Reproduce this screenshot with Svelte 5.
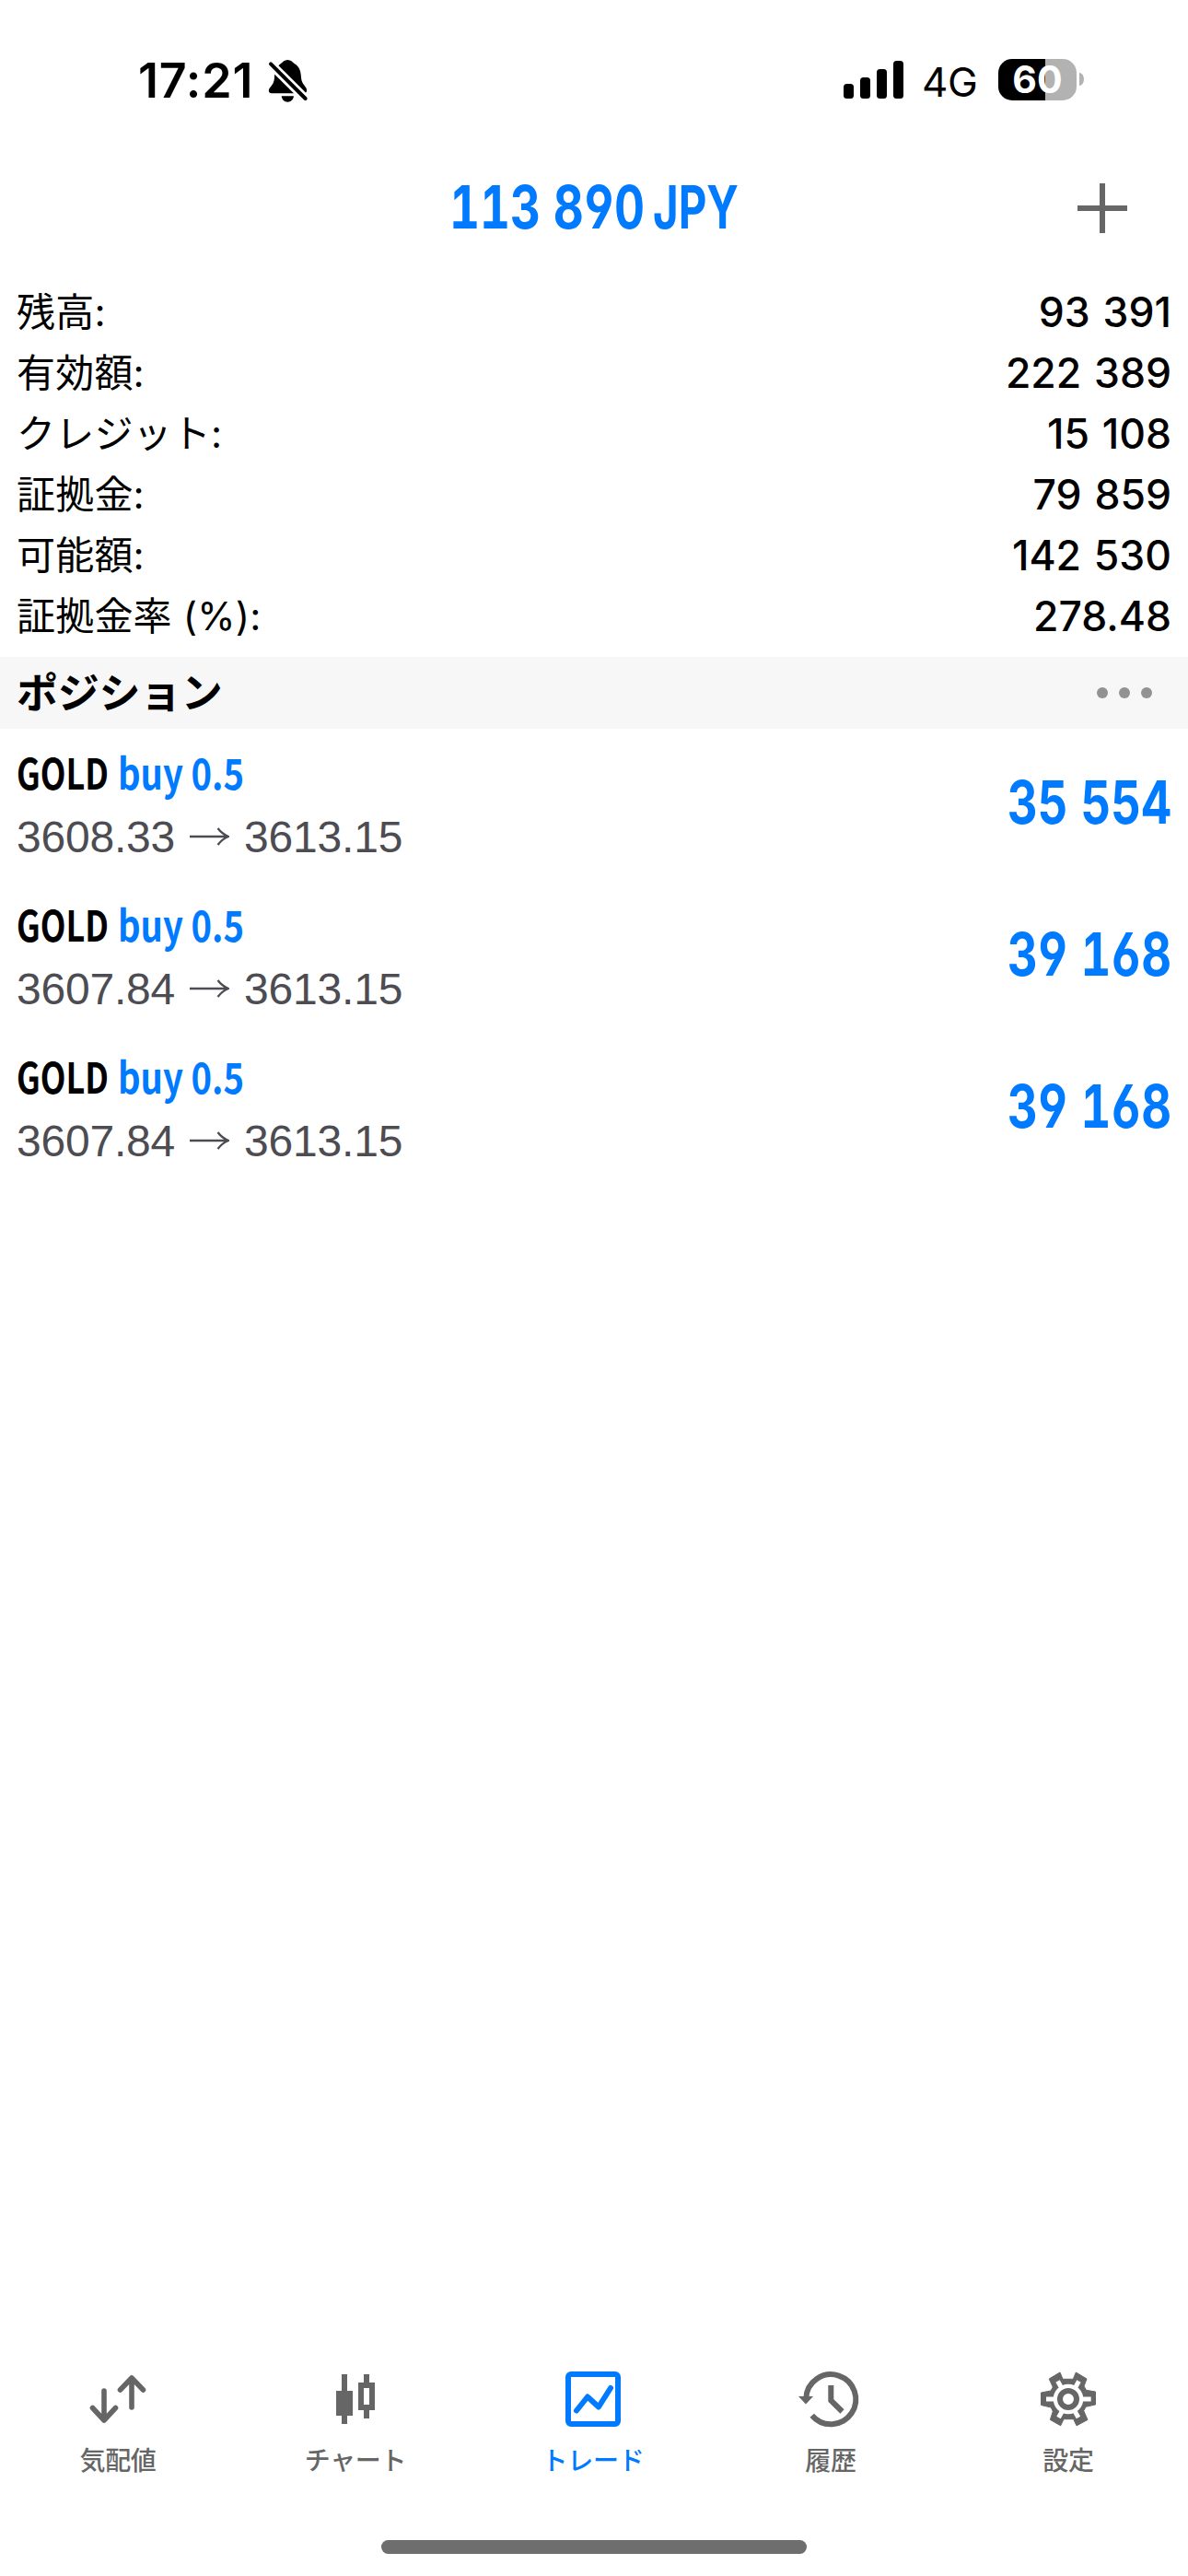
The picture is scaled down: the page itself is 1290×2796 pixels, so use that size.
<script>
  const summary = [
    { label: '残高:', value: '93 391' },
    { label: '有効額:', value: '222 389' },
    { label: 'クレジット:', value: '15 108' },
    { label: '証拠金:', value: '79 859' },
    { label: '可能額:', value: '142 530' },
    { label: '証拠金率 (%):', value: '278.48' },
  ];
  const positions = [
    { symbol: 'GOLD', side: 'buy 0.5', open: '3608.33', now: '3613.15', profit: '35 554' },
    { symbol: 'GOLD', side: 'buy 0.5', open: '3607.84', now: '3613.15', profit: '39 168' },
    { symbol: 'GOLD', side: 'buy 0.5', open: '3607.84', now: '3613.15', profit: '39 168' },
  ];
  const tabs = [
    { id: 'quotes', label: '気配値' },
    { id: 'chart', label: 'チャート' },
    { id: 'trade', label: 'トレード' },
    { id: 'history', label: '履歴' },
    { id: 'settings', label: '設定' },
  ];
  const active = 'trade';
  const squeeze = 0.78;
</script>

<!-- Condensed text: glyphs are squeezed to the given width -->
{#snippet condensed(text, width, height, baseline, cls)}
  <svg class="condensed {cls}" {width} {height} viewBox="0 0 {width} {height}">
    <text transform="scale({squeeze} 1)" x="0" y={baseline} textLength={width / squeeze} lengthAdjust="spacingAndGlyphs">{text}</text>
  </svg>
{/snippet}

<div class="screen">
  <div class="status">
    <span class="clock">17:21</span>
    <svg class="bell" width="44" height="48" viewBox="510 72 132 144">
      <path d="M574 75c10 0 16 7 22 12C612 96 617 112 618 132C619 150 628 156 634 166C640 178 634 184 626 184H522C512 184 510 174 516 166C524 156 530 150 531 132C532 112 538 96 552 87C558 82 564 75 574 75ZM554 193H594C592 206 584 212 574 212S556 206 554 193Z" />
      <path d="M512 82L640 209" stroke="#fff" stroke-width="29" />
      <path d="M519 88L632 201" stroke="#000" stroke-width="12" stroke-linecap="round" />
    </svg>
    <div class="bars"><i class="b1"></i><i class="b2"></i><i class="b3"></i><i class="b4"></i></div>
    <span class="net">4G</span>
    <div class="battery"><span>60</span></div>
    <i class="nub"></i>
  </div>

  <header>
    <span></span>
    <div class="balance">
      {@render condensed('113 890', 212, 78, 61, 'title')}
      {@render condensed('JPY', 93, 78, 61, 'title')}
    </div>
    <svg class="plus" width="54" height="54" viewBox="0 0 54 54"><path d="M27 0V54M0 27H54" stroke="#666" stroke-width="6" /></svg>
  </header>

  <div class="summary">
    {#each summary as row}
      <div class="line"><span class="label">{row.label}</span><span class="value">{row.value}</span></div>
    {/each}
  </div>

  <div class="section">
    <span>ポジション</span>
    <div class="dots"><i></i><i></i><i></i></div>
  </div>

  <div class="positions">
    {#each positions as p}
      <div class="position">
        <div class="info">
          <div class="name">
            {@render condensed(p.symbol, 100, 60, 46, 'symbol')}
            {@render condensed(p.side, 137, 60, 46, 'side')}
          </div>
          <div class="prices">
            <span>{p.open}</span>
            <svg width="43" height="22" viewBox="0 0 43 22"><path d="M0 11H41M30.500 2Q35 8 42 11Q35 14 30.500 20" fill="none" stroke="#4c4c52" stroke-width="2.300" /></svg>
            <span>{p.now}</span>
          </div>
        </div>
        {@render condensed(p.profit, 178, 78, 61, 'profit')}
      </div>
    {/each}
  </div>

  <nav>
    {#each tabs as tab}
      <div class="tab" class:active={tab.id === active}>
        <svg width="72" height="72" viewBox="0 0 72 72" fill="none" stroke="currentColor" stroke-width="6">
          {#if tab.id === 'quotes'}
            <path d="M20 27V58M7.500 45.500L20 59L32.500 45.500M50 45V13M37.500 26L50 13L62.500 26" stroke-width="5.600" stroke-linecap="round" stroke-linejoin="round" />
          {:else if tab.id === 'chart'}
            <path fill="currentColor" stroke="none" fill-rule="evenodd" d="M20 9h6v18h6v27h-6v9h-6v-9h-6V27h6zM44 9h6v9h6v30h-6v9h-6v-9h-6V18h6zM44 24v18h6V24z" />
          {:else if tab.id === 'trade'}
            <rect x="8" y="9" width="54" height="54" rx="3" />
            <path d="M17 48.500L29 33.500L41 44.500L54 24" stroke-linecap="round" stroke-linejoin="round" />
          {:else if tab.id === 'history'}
            <path d="M8.300 35A27 27 0 1 1 14.700 53.700M35.300 21V37.500L47.500 49.500" />
            <path d="M0 33H16L8 41.500Z" fill="currentColor" stroke="none" />
          {:else}
            <path fill="currentColor" stroke="currentColor" stroke-width="1" stroke-linejoin="round" d="M14.200 14L26 7L29 14.300H40.300L43.300 7L55 14L52 22L54.500 26.300L64.500 28V42L54 44.300L51.700 48.700L56 58.400L44 64.800L40.700 57.700H30L26.700 64.800L15.400 58.400L18.300 49.300L16.300 45L5.500 42.500V29L16 27L18.300 23Z" />
            <circle cx="35" cy="36" r="16.300" fill="#fff" stroke="none" />
            <path stroke="#fff" stroke-width="5" d="M11 36H59.700M23.500 16.500L46 56M46.500 16.500L24.500 56" />
            <circle cx="35" cy="36" r="9" fill="#fff" />
          {/if}
        </svg>
        <span>{tab.label}</span>
      </div>
    {/each}
  </nav>
  <div class="home"></div>
</div>

<style>
  :global(body) { background: #fff; }
  .screen {
    box-sizing: border-box;
    width: 1290px;
    height: 2796px;
    display: flex;
    flex-direction: column;
    background: #fff;
    color: #000;
    font-family: Inter, 'Noto Sans CJK JP', sans-serif;
    overflow: hidden;
  }
  svg { display: block; flex: none; }
  .condensed { overflow: visible; }

  .status {
    height: 176px;
    box-sizing: border-box;
    padding: 0 113px 4px 150px;
    display: flex;
    align-items: center;
  }
  .clock { width: 141px; padding-top: 3px; font-size: 52px; font-weight: 600; letter-spacing: 0.800px; white-space: nowrap; }
  .bell { margin-top: 4px; }
  .bars { display: flex; align-items: flex-end; gap: 7px; height: 41px; margin-left: auto; }
  .bars i { width: 11px; border-radius: 3.500px; background: #000; }
  .b1 { height: 16px; }
  .b2 { height: 23px; }
  .b3 { height: 32px; }
  .b4 { height: 41px; }
  .net { width: 83px; margin-left: 20px; font-size: 44px; letter-spacing: -0.300px; margin-top: 6px; }
  .battery {
    width: 85px;
    height: 45px;
    border-radius: 15px;
    background: linear-gradient(90deg, #000 60%, #b2b2b2 60%);
    color: #fff;
    font-size: 41px;
    font-weight: 700;
    line-height: 45px;
    text-align: center;
  }
  .nub { width: 5px; height: 14px; margin-left: 3px; border-radius: 0 5px 5px 0 / 0 7px 7px 0; background: #b2b2b2; }

  header {
    height: 129px;
    box-sizing: border-box;
    padding: 0 66px 29px;
    display: grid;
    grid-template-columns: 1fr auto 1fr;
    align-items: center;
  }
  .balance { display: flex; gap: 9px; }
  .plus { justify-self: end; }
  .title, .profit {
    font-family: Inter, sans-serif;
    font-size: 65px;
    font-weight: 650;
    fill: #007aff;
    font-feature-settings: 'tnum', 'cv03', 'cv04';
  }

  .summary { height: 408px; }
  .line { height: 66px; padding: 0 18px; display: flex; align-items: center; justify-content: space-between; }
  .label { padding-top: 2px; font-size: 42px; line-height: 66px; letter-spacing: 0.200px; }
  .value { padding-top: 1px; font-size: 44.500px; font-weight: 500; line-height: 66px; word-spacing: 2px; }

  .section {
    height: 78px;
    box-sizing: border-box;
    padding: 0 39px 0 18px;
    display: flex;
    align-items: center;
    justify-content: space-between;
    background: #f7f7f7;
    font-size: 45px;
    font-weight: 700;
  }
  .section span { padding-bottom: 6px; letter-spacing: -0.300px; }
  .dots { display: flex; gap: 12px; }
  .dots i { width: 12px; height: 12px; border-radius: 50%; background: #929292; }

  .position { height: 165px; box-sizing: border-box; padding: 20px 18px 0; display: flex; justify-content: space-between; }
  .info { display: flex; flex-direction: column; }
  .name { display: flex; gap: 10px; }
  .symbol, .side { font-family: 'Noto Sans CJK JP', sans-serif; font-size: 46px; font-weight: 700; }
  .side { fill: #007aff; }
  .prices { display: flex; align-items: center; gap: 16px; height: 74px; font: 48px 'Liberation Sans', sans-serif; letter-spacing: -0.200px; color: #4c4c52; }
  .profit { margin-top: 22px; }

  nav { display: flex; margin-top: auto; height: 189px; }
  .tab { width: 258px; display: flex; flex-direction: column; align-items: center; color: #666; }
  .tab span { margin: 7px 2px 0 0; font: 500 28px/44px 'Noto Sans CJK JP', sans-serif; letter-spacing: -0.300px; }
  .tab.active { color: #007aff; }

  .home { width: 462px; height: 15px; margin: 0 auto 24px; border-radius: 8px; background: #6e6e6e; flex: none; }
</style>
